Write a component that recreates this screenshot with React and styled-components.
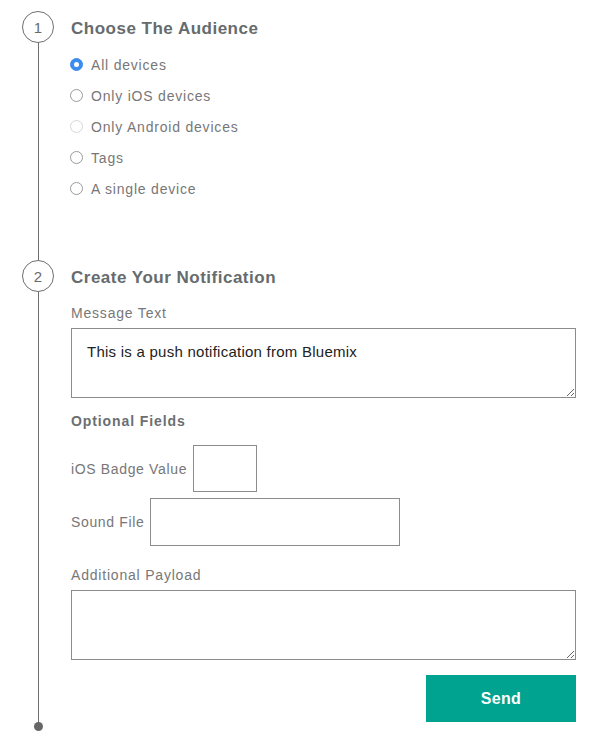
import React from "react";
import styled, { createGlobalStyle } from "styled-components";

const GlobalStyle = createGlobalStyle`
  body {
    margin: 0;
    background: #fff;
    font-family: "Liberation Sans", Arial, sans-serif;
  }
`;

const options = [
  { label: "All devices", checked: true },
  { label: "Only iOS devices" },
  { label: "Only Android devices", faint: true },
  { label: "Tags" },
  { label: "A single device" },
];

const App = () => {
  return (
    <>
      <GlobalStyle />
      <Page>
        <Step>
          <Rail>
            <Circle>1</Circle>
            <Line />
          </Rail>
          <Content $bottom={56}>
            <Heading>Choose The Audience</Heading>
            <RadioList>
              {options.map((o) => (
                <RadioRow key={o.label}>
                  <Radio $checked={o.checked} $faint={o.faint} />
                  <span>{o.label}</span>
                </RadioRow>
              ))}
            </RadioList>
          </Content>
        </Step>
        <Step>
          <Rail>
            <Circle>2</Circle>
            <Line />
            <Dot />
          </Rail>
          <Content $bottom={9}>
            <Heading>Create Your Notification</Heading>
            <Label $top={11}>Message Text</Label>
            <TextArea defaultValue="This is a push notification from Bluemix" />
            <SubHeading>Optional Fields</SubHeading>
            <InlineField $top={14}>
              <span>iOS Badge Value</span>
              <Input $width={64} $height={47} />
            </InlineField>
            <InlineField $top={6}>
              <span>Sound File</span>
              <Input $width={250} $height={48} />
            </InlineField>
            <Label $top={19}>Additional Payload</Label>
            <TextArea />
            <Actions>
              <SendButton>Send</SendButton>
            </Actions>
          </Content>
        </Step>
      </Page>
    </>
  );
};

const Page = styled.main`
  padding: 11px 0 0 22px;
  width: 554px;
`;

const Step = styled.section`
  display: grid;
  grid-template-columns: 32px 1fr;
  column-gap: 17px;
`;

const Rail = styled.div`
  display: flex;
  flex-direction: column;
  align-items: center;
`;

const Circle = styled.div`
  box-sizing: border-box;
  width: 32px;
  height: 32px;
  flex-shrink: 0;
  border: 1px solid #6f6f6f;
  border-radius: 50%;
  display: flex;
  align-items: center;
  justify-content: center;
  font-size: 15px;
  color: #6a6a6a;
`;

const Line = styled.div`
  flex: 1;
  width: 1px;
  background: #6f6f6f;
`;

const Dot = styled.div`
  width: 9px;
  height: 9px;
  border-radius: 50%;
  background: #666;
  margin-top: -1px;
  flex-shrink: 0;
`;

const Content = styled.div`
  padding-bottom: ${(p) => p.$bottom}px;
  display: flex;
  flex-direction: column;
`;

const Heading = styled.h2`
  box-sizing: border-box;
  margin: 0;
  height: 32px;
  padding-top: 4px;
  line-height: 28px;
  font-size: 17px;
  font-weight: bold;
  letter-spacing: 0.5px;
  color: #666b6d;
`;

const RadioList = styled.div`
  margin-top: 6px;
  display: flex;
  flex-direction: column;
`;

const RadioRow = styled.label`
  display: flex;
  align-items: center;
  gap: 8px;
  height: 31px;
  margin-left: -1px;
  font-size: 14px;
  letter-spacing: 0.8px;
  color: #777;
`;

const Radio = styled.span`
  box-sizing: border-box;
  width: 13px;
  height: 13px;
  border-radius: 50%;
  flex-shrink: 0;
  border: 1px solid ${(p) => (p.$checked ? "#3c8cf0" : p.$faint ? "#d6d6d6" : "#9a9a9a")};
  background: ${(p) => (p.$checked ? "#3c8cf0" : "#fff")};
  display: flex;
  align-items: center;
  justify-content: center;
  &::after {
    content: "";
    display: ${(p) => (p.$checked ? "block" : "none")};
    width: 5px;
    height: 5px;
    border-radius: 50%;
    background: #fff;
  }
`;

const Label = styled.div`
  margin-top: ${(p) => p.$top}px;
  line-height: 20px;
  font-size: 14px;
  letter-spacing: 0.8px;
  color: #777;
`;

const TextArea = styled.textarea`
  box-sizing: border-box;
  margin-top: 5px;
  width: 505px;
  height: 70px;
  padding: 14px 15px;
  border: 1px solid #8c8c8c;
  border-radius: 0;
  font-family: "Liberation Sans", Arial, sans-serif;
  font-size: 15px;
  letter-spacing: 0.25px;
  color: #222;
  outline: none;
`;

const SubHeading = styled.div`
  margin-top: 13px;
  line-height: 20px;
  font-size: 14px;
  font-weight: bold;
  letter-spacing: 0.9px;
  color: #6b6f71;
`;

const InlineField = styled.div`
  margin-top: ${(p) => p.$top}px;
  display: flex;
  align-items: center;
  gap: 6px;
  font-size: 14px;
  letter-spacing: 0.65px;
  color: #777;
`;

const Input = styled.input`
  box-sizing: border-box;
  width: ${(p) => p.$width}px;
  height: ${(p) => p.$height}px;
  border: 1px solid #8c8c8c;
  border-radius: 0;
  outline: none;
`;

const Actions = styled.div`
  margin-top: 15px;
  width: 505px;
  display: flex;
  justify-content: flex-end;
`;

const SendButton = styled.button`
  width: 150px;
  height: 47px;
  border: none;
  border-radius: 0;
  background: #00a38f;
  color: #fff;
  font-family: "Liberation Sans", Arial, sans-serif;
  font-size: 16px;
  font-weight: bold;
  letter-spacing: 0.3px;
  cursor: pointer;
`;

export default App;
